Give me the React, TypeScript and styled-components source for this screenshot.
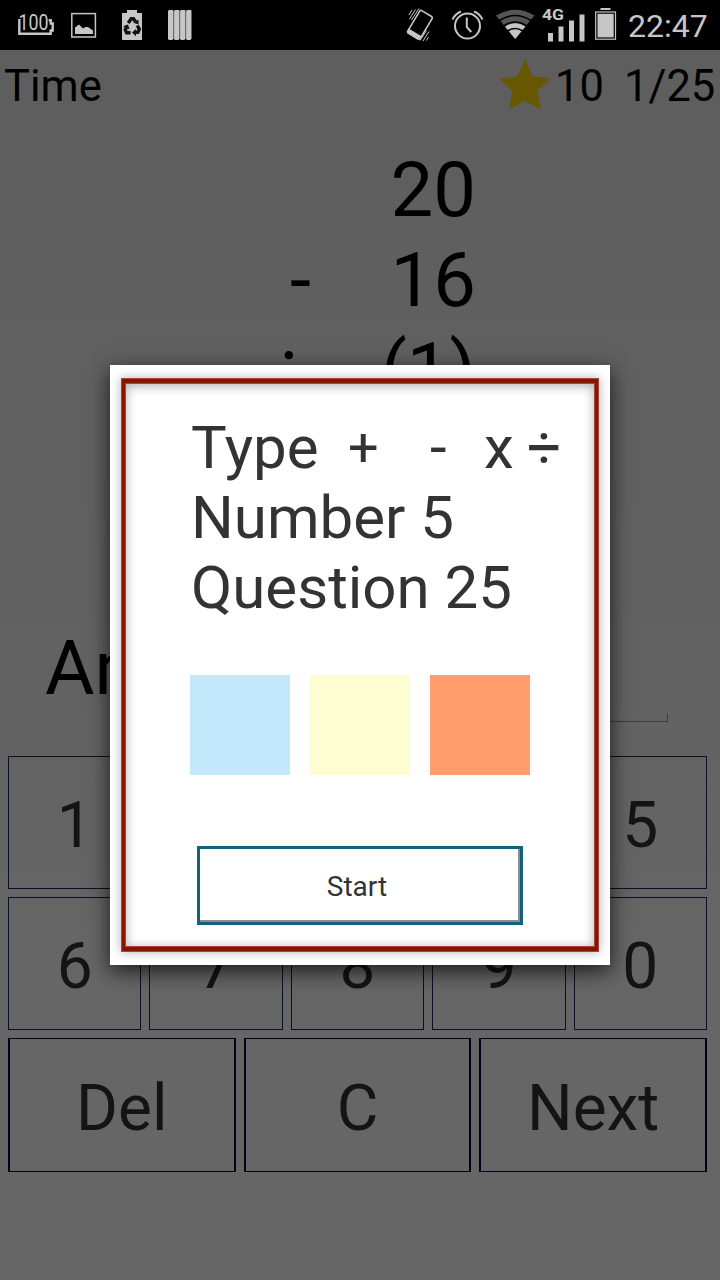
import React from 'react';
import styled, { createGlobalStyle } from 'styled-components';

const GlobalStyle = createGlobalStyle`
  * { box-sizing: border-box; }
  body { margin: 0; background: #000; font-family: Roboto, "Liberation Sans", sans-serif; }
  svg { display: block; flex: none; }
  button { font-family: inherit; cursor: pointer; }
`;

const Screen = styled.div`
  position: relative;
  width: 720px;
  height: 1280px;
  display: flex;
  flex-direction: column;
  overflow: hidden;
`;

const StatusBar = styled.header`
  height: 50px;
  flex: none;
  display: flex;
  justify-content: space-between;
  background: #000;
  color: #c6c6c6;
  padding: 0 12px 0 16px;
`;

const StatusGroup = styled.div<{ $gap: number }>`
  display: flex;
  gap: ${(p) => p.$gap}px;
`;

const Clock = styled.span`
  font-size: 32px;
  line-height: 52px;
  width: 80px;
  white-space: nowrap;
`;

const Page = styled.main`
  flex: 1;
  display: flex;
  flex-direction: column;
  background: linear-gradient(#eaeaea, #f3f3f3 45%, #ffffff 75%);
  color: #000;
`;

const ScoreRow = styled.div`
  display: flex;
  align-items: center;
  height: 72px;
  padding: 0 5px 0 4px;
  font-size: 43.5px;
  line-height: 50px;
  white-space: pre;
`;

const ScoreText = styled.span`
  padding-top: 1px;
`;

const Score = styled(ScoreText)`
  margin-left: 4px;
`;

const Progress = styled(ScoreText)`
  width: 91px;
  margin-left: 20px;
`;

const StarSlot = styled.div`
  margin-left: auto;
`;

const Sum = styled.section`
  height: 498px;
  padding-top: 23px;
  font-size: 76px;
  line-height: 90px;
`;

const SumRow = styled.div`
  display: grid;
  grid-template-columns: 311px 165px;
  text-align: right;
`;

const AnswerRow = styled.div`
  height: 86px;
  display: flex;
  padding: 0 52px 0 45px;
  font-size: 76px;
  line-height: 96px;
`;

const AnswerField = styled.div`
  flex: 1;
  height: 8px;
  margin-top: 94px;
  border: 1px solid #9a9a9a;
  border-top: 0;
`;

const Keypad = styled.div`
  display: flex;
  flex-direction: column;
  gap: 8px;
  padding: 50px 13px 0 8px;
`;

const KeyRow = styled.div<{ $columns: number }>`
  display: grid;
  grid-template-columns: repeat(${(p) => p.$columns}, 1fr);
  gap: 8px;
`;

const Key = styled.button<{ $wide?: boolean }>`
  height: ${(p) => (p.$wide ? 134 : 133)}px;
  padding: 7px 0 0;
  border: solid ${(p) => (p.$wide ? '#06093c' : '#1e2658')};
  border-width: ${(p) => (p.$wide ? '1px 2px' : '1px')};
  background: transparent;
  color: #333;
  font-size: 64px;
  line-height: 76px;
`;

const Scrim = styled.div`
  position: absolute;
  inset: 50px 0 0;
  display: flex;
  justify-content: center;
  align-items: center;
  background: rgba(0, 0, 0, 0.6);
`;

const Dialog = styled.div`
  width: 500px;
  height: 600px;
  padding: 14px 12px;
  background: #fff;
  box-shadow: 0 6px 20px rgba(0, 0, 0, 0.75);
`;

const DialogFrame = styled.div`
  height: 572px;
  padding: 30px 0 0 65px;
  border: solid #851600;
  border-width: 4px 3px;
  box-shadow:
    0 0 0 1px #a5483a,
    inset 0 0 0 1px #a5483a,
    0 0 10px 1px rgba(0, 0, 0, 0.3),
    inset 0 2px 11px 1px rgba(0, 0, 0, 0.32);
  color: #333;
`;

const OptionLine = styled.div`
  display: flex;
  height: 70px;
  padding-left: 1px;
  font-size: 60px;
  line-height: 70px;
  white-space: pre;
`;

const Operator = styled.span<{ $width: number }>`
  width: ${(p) => p.$width}px;
`;

const PlusOperator = styled(Operator)`
  font-size: 54px;
`;

const Swatches = styled.div`
  display: flex;
  gap: 20px;
  margin-top: 52px;
`;

const Swatch = styled.button<{ $color: string }>`
  width: 100px;
  height: 100px;
  padding: 0;
  border: 0;
  background: ${(p) => p.$color};
`;

const StartButton = styled.button`
  display: block;
  width: 326px;
  height: 79px;
  margin: 71px 0 0 7px;
  padding: 2px 6px 0 0;
  border: 3px solid #13617f;
  background: #fff;
  box-shadow: inset -2px -2px 0 #8c8c8c;
  color: #333;
  font-size: 28px;
`;

const IconSvg = ({ x, w, children }: { x: number; w: number; children: React.ReactNode }) => (
  <svg width={w} height={50} viewBox={`${x} 0 ${w} 50`} fill="#c6c6c6" aria-hidden="true">
    {children}
  </svg>
);

const PercentIcon = () => (
  <IconSvg x={16} w={40}>
    <path d="M20.500 20.200h-1.200v13.600h31.400v-3.300h2v-7h-2v-3.300h-2" fill="none" stroke="#c6c6c6" strokeWidth="2.400" />
    <text x="18.500" y="30" fontFamily="Roboto, sans-serif" fontSize="22" textLength="30" lengthAdjust="spacingAndGlyphs">100</text>
  </IconSvg>
);

const ImageIcon = () => (
  <IconSvg x={70} w={28}>
    <rect x="71.800" y="13.600" width="23.600" height="23.400" fill="none" stroke="#c6c6c6" strokeWidth="1.500" />
    <path d="M75 34v-6.500l4-3 4 4 2.500-1.500 2.500 0 5 3.500V34z" />
  </IconSvg>
);

const RecycleIcon = () => (
  <IconSvg x={121} w={23}>
    <path d="M122 13h5v-3h10v3h5v27h-20z" />
    <g fill="none" stroke="#111" strokeWidth="3.400">
      <path d="M128.200 23l3-4.200h2.300l1.900 2.800" />
      <path d="M137.300 25.500l2 3.600-1.400 3.200h-3.200" />
      <path d="M130.600 32.800h-4l-1.400-3.200 1.500-2.600" />
    </g>
    <path d="M138.500 19.500v5l-5.200-1.700zM136 29v7.200l-4-3.800zM123 26.200l5-1.800 1.600 5z" fill="#111" />
  </IconSvg>
);

const BarsIcon = () => (
  <IconSvg x={167} w={26}>
    {[168, 174, 180, 186].map((x) => (
      <path key={x} d={`M${x} 11l1-1h4l.5 1v27.500l-1 1.500h-3.500l-1-1z`} />
    ))}
    <path d="M173.800 11v28M179.800 11v28M185.800 11v28" stroke="#777" strokeWidth=".7" />
  </IconSvg>
);

const VibrateIcon = () => (
  <IconSvg x={404} w={30}>
    <g transform="rotate(31 419.500 25)">
      <rect x="412.500" y="11.500" width="14.500" height="26" rx="1.500" fill="none" stroke="#c6c6c6" strokeWidth="1.600" />
      <path d="M412 33.500h15v3.500l-1.500 1.500h-12l-1.500-1.500z" />
    </g>
    <path d="M409.500 19l6-9.500M411.500 20l7.500-11.500M408.800 15l3.200-5M423 41l6-9.500M420 40.500l6.500-10M426.500 40.500l2-3.500" stroke="#c6c6c6" strokeWidth="1" />
  </IconSvg>
);

const AlarmIcon = () => (
  <IconSvg x={451} w={34}>
    <g fill="none" stroke="#c6c6c6" strokeWidth="2">
      <circle cx="467.500" cy="26" r="12.500" />
      <path d="M466.800 17.500v9.500l4.500 5M452.500 19.500q2.500-5.500 8.500-8M474 11.500q6 2.500 8.500 8" />
    </g>
  </IconSvg>
);

const WifiIcon = () => (
  <IconSvg x={495} w={40}>
    <path d="M515.200 39l-19.200-23.500q19.200-11.500 38.400 0z" fill="#555" />
    <path d="M515.200 39l-10.200-12.500q10.200-6.500 20.400 0z" />
    <path d="M499.500 20.500q15.700-10 31.400 0M503.800 26q11.400-8 22.800 0M507.500 31q7.700-5 15.400 0" fill="none" stroke="#000" strokeWidth="1.600" />
  </IconSvg>
);

const SignalIcon = () => (
  <IconSvg x={541} w={47}>
    <text x="542" y="20" fontFamily="Roboto, sans-serif" fontSize="14.500" fontWeight="700" textLength="22" lengthAdjust="spacingAndGlyphs">4G</text>
    <path d="M548 33h5v8.500h-5zM558.500 26.500h5v15h-5zM569 20.500h5v21h-5zM579.500 14.500h5v27h-5z" />
  </IconSvg>
);

const BatteryIcon = () => (
  <IconSvg x={594} w={24}>
    <path d="M600.500 8h10v2h-10z" />
    <rect x="595.700" y="12" width="19.800" height="27.200" fill="none" stroke="#c6c6c6" strokeWidth="1.200" />
    <rect x="597.500" y="13.800" width="16.200" height="23.600" />
  </IconSvg>
);

const StarIcon = () => (
  <svg width="54" height="54" viewBox="496 58 54 54" fill="#ffd900" aria-hidden="true">
    <path d="M524 58l7.500 17.200 18.500 2.300-13.500 12.500 3.800 18.500-16.300-8.500-16.300 8.500 3.800-18.500L498 77.500l18.500-2.300z" />
  </svg>
);

const sumRows = [
  { operator: '', value: '20' },
  { operator: '-', value: '16' },
  { operator: '÷', value: '(1)' },
];

const digitRows = [
  ['1', '2', '3', '4', '5'],
  ['6', '7', '8', '9', '0'],
];

const swatchColors = ['#c3e8fc', '#fefdd1', '#ff9d6c'];

export default function App() {
  return (
    <>
      <GlobalStyle />
      <Screen>
        <StatusBar>
          <StatusGroup $gap={23}>
            <StatusGroup $gap={14}>
              <PercentIcon />
              <ImageIcon />
            </StatusGroup>
            <RecycleIcon />
            <BarsIcon />
          </StatusGroup>
          <StatusGroup $gap={10}>
            <StatusGroup $gap={17}>
              <VibrateIcon />
              <AlarmIcon />
            </StatusGroup>
            <StatusGroup $gap={6}>
              <WifiIcon />
              <SignalIcon />
              <BatteryIcon />
            </StatusGroup>
            <Clock>22:47</Clock>
          </StatusGroup>
        </StatusBar>
        <Page>
          <ScoreRow>
            <ScoreText>Time</ScoreText>
            <StarSlot>
              <StarIcon />
            </StarSlot>
            <Score>10</Score>
            <Progress>1/25</Progress>
          </ScoreRow>
          <Sum>
            {sumRows.map((row) => (
              <SumRow key={row.value}>
                <span>{row.operator}</span>
                <span>{row.value}</span>
              </SumRow>
            ))}
          </Sum>
          <AnswerRow>
            <span>Answer</span>
            <AnswerField />
          </AnswerRow>
          <Keypad>
            {digitRows.map((digits) => (
              <KeyRow key={digits[0]} $columns={5}>
                {digits.map((digit) => (
                  <Key key={digit}>{digit}</Key>
                ))}
              </KeyRow>
            ))}
            <KeyRow $columns={3}>
              <Key $wide>Del</Key>
              <Key $wide>C</Key>
              <Key $wide>Next</Key>
            </KeyRow>
          </Keypad>
        </Page>
        <Scrim>
          <Dialog role="dialog">
            <DialogFrame>
              <OptionLine>
                <Operator $width={157}>Type</Operator>
                <PlusOperator $width={82}>+</PlusOperator>
                <Operator $width={54}>-</Operator>
                <Operator $width={43}>x</Operator>
                <Operator $width={36}>÷</Operator>
              </OptionLine>
              <OptionLine>Number 5</OptionLine>
              <OptionLine>Question 25</OptionLine>
              <Swatches>
                {swatchColors.map((color) => (
                  <Swatch key={color} $color={color} />
                ))}
              </Swatches>
              <StartButton>Start</StartButton>
            </DialogFrame>
          </Dialog>
        </Scrim>
      </Screen>
    </>
  );
}
